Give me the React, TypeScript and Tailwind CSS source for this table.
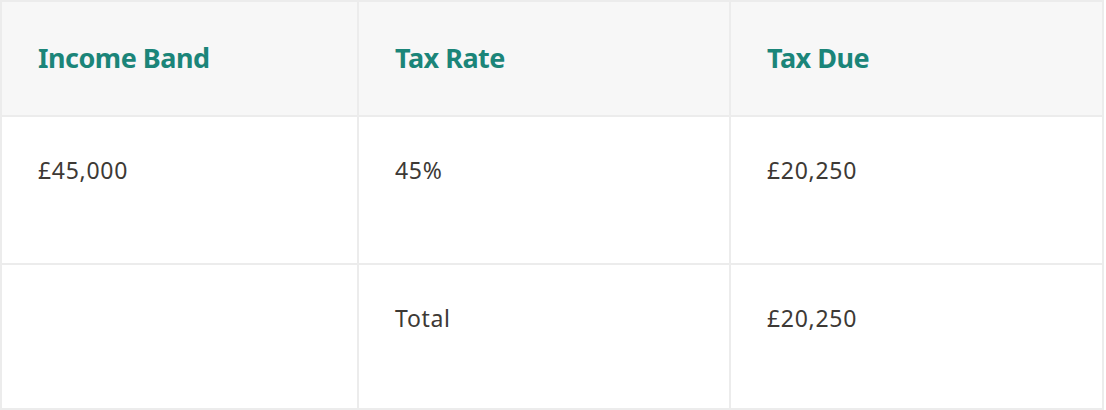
const rows = [
  { band: '£45,000', rate: '45%', due: '£20,250' },
  { band: '', rate: 'Total', due: '£20,250' },
];

export default function App() {
  return (
    <div className="bg-white" style={{ fontFamily: '"Noto Sans", "Open Sans", sans-serif' }}>
      <table className="w-[1104px] table-fixed border-collapse border-2 border-[#ececec]">
        <colgroup>
          <col className="w-[357px]" />
          <col className="w-[372px]" />
          <col />
        </colgroup>
        <thead>
          <tr className="h-[115px] bg-[#f7f7f7]">
            {['Income Band', 'Tax Rate', 'Tax Due'].map((h) => (
              <th
                key={h}
                className="border-2 border-[#ececec] pl-9 text-left align-middle text-[27px] font-bold tracking-[-0.5px] text-[#1b8579]"
              >
                {h}
              </th>
            ))}
          </tr>
        </thead>
        <tbody>
          {rows.map((r, i) => (
            <tr key={i} className={i === 0 ? 'h-[148px]' : 'h-[145px]'}>
              {[r.band, r.rate, r.due].map((c, j) => (
                <td
                  key={j}
                  className="border-2 border-[#ececec] pl-9 pt-[37px] align-top text-[23px] leading-[32px] tracking-[0.7px] text-[#3d3935]"
                >
                  {c}
                </td>
              ))}
            </tr>
          ))}
        </tbody>
      </table>
    </div>
  );
}
